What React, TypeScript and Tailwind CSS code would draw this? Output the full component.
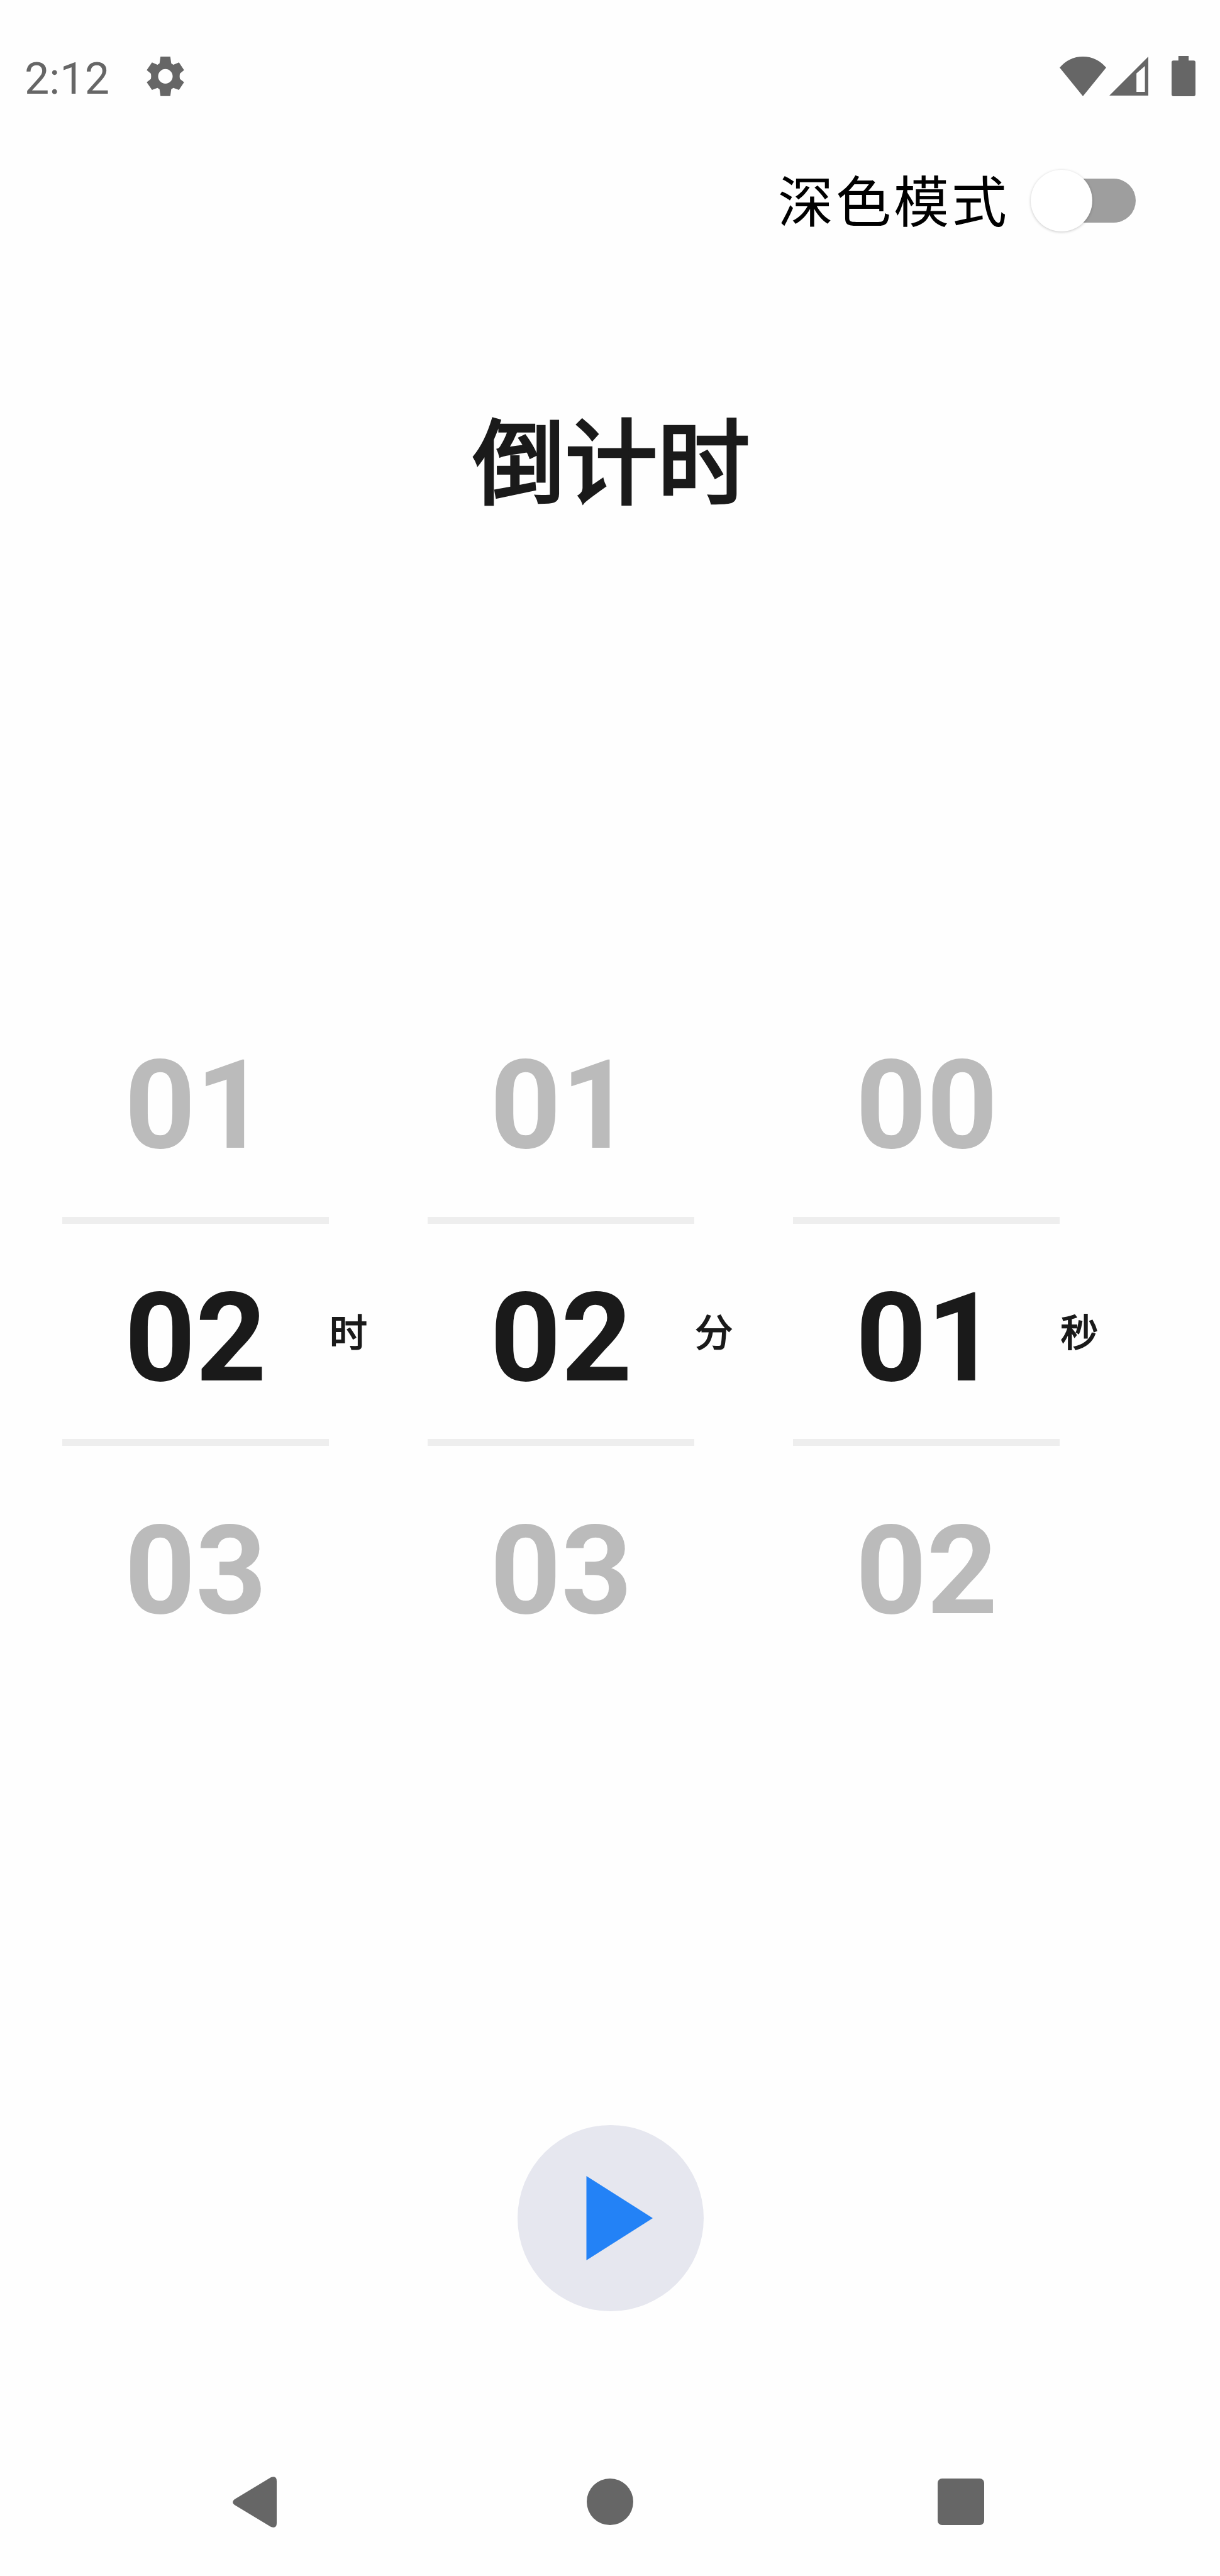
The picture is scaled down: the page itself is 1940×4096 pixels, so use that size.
import React from "react";

const columns = [
  { prev: "01", current: "02", next: "03", unit: "时" },
  { prev: "01", current: "02", next: "03", unit: "分" },
  { prev: "00", current: "01", next: "02", unit: "秒" },
];

function StatusBar() {
  return (
    <header className="flex h-[242px] shrink-0 items-center justify-between pr-[39px] pl-[39px] text-[#666666]">
      <div className="flex items-center">
        <span className="pt-[8px] font-[Roboto] text-[70px] leading-none">2:12</span>
        <svg className="ml-[59px] h-[63px] w-[60px]" viewBox="0 0 200 210" fill="currentColor">
          <path
            fillRule="evenodd"
            d="M74 0H126L131 36L142 43L172 31L199 72L177 90Q174 105 177 118L199 136L172 177L142 166L131 173L126 209H74L69 173L58 166L29 177L1 136L23 118Q26 105 23 90L1 72L29 31L58 43L69 36ZM100 66A38 38 0 1 0 100 143A38 38 0 1 0 100 66Z"
          />
        </svg>
      </div>
      <div className="flex items-center">
        <svg className="h-[63px] w-[74px]" viewBox="0 0 246 208" preserveAspectRatio="none" fill="currentColor">
          <path d="M0 58Q50 0 123 0T246 58L123 208Z" />
        </svg>
        <svg className="ml-[5px] h-[62px] w-[62px]" viewBox="0 0 207 206" preserveAspectRatio="none" fill="currentColor">
          <path fillRule="evenodd" d="M0 206L207 0V206ZM144 89V186H189V50Z" />
        </svg>
        <svg className="ml-[37px] h-[64px] w-[38px]" viewBox="0 0 126 213" preserveAspectRatio="none" fill="currentColor">
          <path d="M36 0H90V24H116Q126 24 126 34V203Q126 213 116 213H10Q0 213 0 203V34Q0 24 10 24H36Z" />
        </svg>
      </div>
    </header>
  );
}

function DarkModeSwitch() {
  return (
    <label className="flex h-[154px] shrink-0 items-center justify-end pr-[134px]">
      <span className="pb-[9px] text-[88px] leading-none tracking-[4px] text-black">深色模式</span>
      <span className="relative ml-[32px] flex h-[100px] w-[169px] items-center justify-end">
        <span className="h-[70px] w-[140px] rounded-full bg-[#9e9e9e]" />
        <span className="absolute top-px left-[2px] size-[98px] rounded-full bg-white shadow-[0_1px_4px_rgba(0,0,0,0.22)]" />
      </span>
    </label>
  );
}

function Row({ value, tone }: { value: string; tone: string }) {
  return <div className={`flex items-center pl-[99px] font-[Roboto] text-[197px] leading-none font-bold ${tone}`}>{value}</div>;
}

function Picker() {
  return (
    <section className="flex shrink-0 pl-[99px]">
      {columns.map((c) => (
        <div key={c.unit} className="flex w-[581.2px] shrink-0 items-center">
          <div className="w-[424px]">
            <Row value={c.prev} tone="h-[384px] pt-[28px] text-[#bbbbbb]" />
            <div className="h-[11px] bg-[#eeeeee]" />
            <Row value={c.current} tone="h-[342px] pt-[21px] text-[#1a1a1a]" />
            <div className="h-[11px] bg-[#eeeeee]" />
            <Row value={c.next} tone="h-[384px] pt-[13px] text-[#bbbbbb]" />
          </div>
          <span className="pb-[5px] pl-px text-[60px] leading-none text-[#1a1a1a] [-webkit-text-stroke:1.9px_#1a1a1a]">{c.unit}</span>
        </div>
      ))}
    </section>
  );
}

export default function App() {
  return (
    <main className="flex h-[4096px] w-[1940px] flex-col overflow-hidden bg-[#fefefe] font-['Noto_Sans_CJK_SC',sans-serif]">
      <StatusBar />
      <DarkModeSwitch />
      <h1 className="mt-[253px] shrink-0 pl-[4px] text-center text-[147px] leading-[151px] font-normal text-[#1a1a1a] [-webkit-text-stroke:4.6px_#1a1a1a]">
        倒计时
      </h1>
      <div className="mt-[751px]">
        <Picker />
      </div>
      <button className="mt-[696px] ml-[823px] flex size-[296px] shrink-0 items-center rounded-full bg-[#e6e7ef]">
        <svg className="ml-[109px] h-[134px] w-[106px]" viewBox="0 0 106 134" fill="#2382f6">
          <path d="M0.5 0L106 67L0.5 134Z" />
        </svg>
      </button>
      <nav className="mt-auto flex h-[236px] shrink-0 items-center pl-[370px] text-[#666666]">
        <svg className="h-[81px] w-[70px]" viewBox="0 0 70 81" fill="currentColor">
          <path d="M3 36L61 1Q70 -2 70 7V74Q70 83 61 80L3 45Q-3 40.500 3 36Z" />
        </svg>
        <span className="ml-[493px] size-[74px] rounded-full bg-current" />
        <span className="ml-[484px] size-[74px] rounded-[7px] bg-current" />
      </nav>
    </main>
  );
}
